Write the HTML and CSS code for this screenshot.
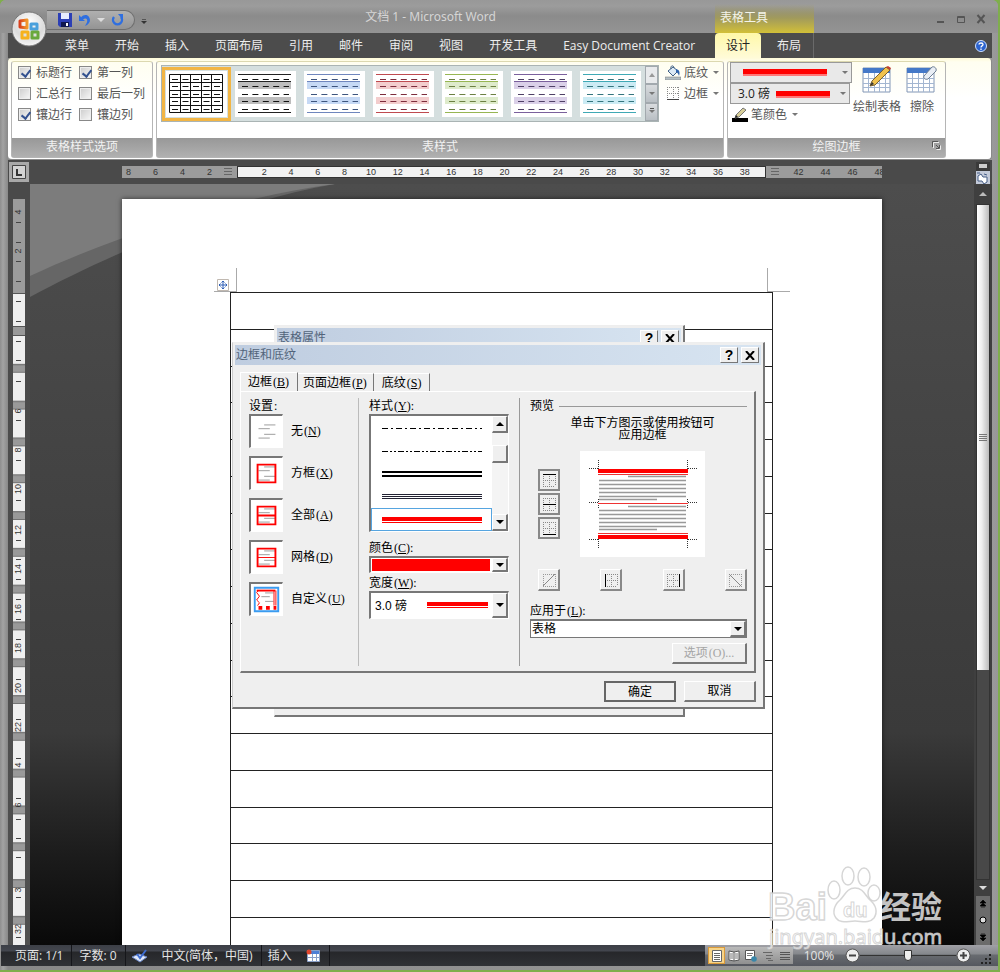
FILE: index.html
```html
<!DOCTYPE html>
<html lang="zh-CN">
<head>
<meta charset="utf-8">
<title>文档 1 - Microsoft Word</title>
<link rel="stylesheet" href="styles.css">
</head>
<body>
<svg class="defs" aria-hidden="true">
  <symbol id="style-thumb" viewBox="0 0 61 46">
    <path class="shade" d="M3 11h53v7H3zM3 26h53v7H3z"/>
    <path class="rule" d="M3 3.5h53M3 10.5h53M3 41.5h53"/>
    <path class="dash" d="M7 8.5h47M7 15.5h47M7 23.5h47M7 30.5h47M7 38.5h47"/>
  </symbol>
  <symbol id="text-lines" viewBox="0 0 33 33">
    <path d="M14 9.5h12M8 13.5h12M14 19.5h12M8 23.5h12" stroke="#999" fill="none"/>
  </symbol>
  <symbol id="dots" viewBox="0 0 18 18">
    <path d="M3 3.5h12M3 9.5h12M3 15.5h12M3.500 3v12M9.500 3v12M15.500 3v12" stroke="#888" stroke-dasharray="1 1" fill="none"/>
  </symbol>
</svg>
<div class="window">
  <header class="titlebar">
    <div class="quick">
      <div class="quick-pill">
        <button type="button" aria-label="保存"><svg width="14" height="14" viewBox="0 0 14 14"><path d="M0 0h14v14H2l-2-2z" fill="#2c3fb5"/><path d="M3 0h8v6H3z" fill="#e6ebff"/><path d="M3 9h8v5H3z" fill="#10184f"/><path d="M8 10h2v3H8z" fill="#fff"/></svg></button>
        <button type="button" aria-label="撤消"><svg width="13" height="13" viewBox="0 0 13 13"><path d="M1 1v6h6L5 5.200c3-2 5 0 4 3L7 12c5-2 6-6 4-9S5 1 3.200 3.200z" fill="#2f6fe0"/></svg></button>
        <i class="tri light"></i>
        <button type="button" aria-label="重复"><svg width="13" height="13" viewBox="0 0 13 13"><path d="M3 3a4.500 4.500 0 1 0 7 0" fill="none" stroke="#2f6fe0" stroke-width="2.400"/><path d="M7 0h5v6z" fill="#2f6fe0"/></svg></button>
      </div>
      <button type="button" class="quick-more" aria-label="自定义"><i class="tri dark lined"></i></button>
    </div>
    <h1 class="title">文档 1 - Microsoft Word</h1>
    <div class="context-title">表格工具</div>
    <div class="window-buttons">
      <button type="button" aria-label="最小化"><svg width="10" height="10" viewBox="0 0 10 10"><path d="M1 8h7" stroke="#555" stroke-width="2"/></svg></button>
      <button type="button" aria-label="最大化"><svg width="10" height="10" viewBox="0 0 10 10"><path d="M1.500 2.500h7v6h-7zM1 3.500h8" stroke="#555" fill="none"/></svg></button>
      <button type="button" aria-label="关闭"><svg width="10" height="10" viewBox="0 0 10 10"><path d="M1.500 1l7 8M8.500 1l-7 8" stroke="#555" stroke-width="2"/></svg></button>
    </div>
  </header>
  <button type="button" class="orb" aria-label="Office">
    <svg width="36" height="36" viewBox="0 0 36 36">
      <defs>
        <radialGradient id="orb-fill" cx=".5" cy=".3" r=".75"><stop offset="0" stop-color="#fff"/><stop offset=".6" stop-color="#dcdcdc"/><stop offset="1" stop-color="#fafafa"/></radialGradient>
        <linearGradient id="orb-red"><stop offset="0" stop-color="#d8401c"/><stop offset="1" stop-color="#f29a2c"/></linearGradient>
      </defs>
      <circle cx="18" cy="18" r="17" fill="url(#orb-fill)" stroke="#777"/>
      <g fill="none" stroke-width="3" stroke-linejoin="round">
        <path d="M9 10l7-1v8l-7-1z" stroke="url(#orb-red)"/>
        <path d="M20 13h6v5h-6z" stroke="#4aa0dc"/>
        <path d="M11 21h6v6h-6z" stroke="#f6b21c"/>
        <path d="M21 21h6v6h-6z" stroke="#6aa83c"/>
      </g>
    </svg>
  </button>
  <nav class="menubar">
    <a href="#">菜单</a><a href="#">开始</a><a href="#">插入</a><a href="#">页面布局</a><a href="#">引用</a><a href="#">邮件</a><a href="#">审阅</a><a href="#">视图</a><a href="#">开发工具</a><a href="#">Easy Document Creator</a>
    <div class="context-tabs"><a href="#" class="active">设计</a><a href="#">布局</a></div>
    <div class="help"><button type="button" aria-label="帮助"><svg width="12" height="12" viewBox="0 0 12 12"><circle cx="6" cy="6" r="5.500" fill="#2b63cf" stroke="#cfe0ff"/><path d="M4 4.500C4 2.500 8 2.500 8 4.500 8 6 6 5.800 6 7.500M6 8.500v1.400" stroke="#fff" stroke-width="1.300" fill="none"/></svg></button></div>
  </nav>
  <section class="ribbon">
    <div class="group options">
      <div class="group-body checks">
        <label><input type="checkbox" checked>标题行</label><label><input type="checkbox" checked>第一列</label>
        <label><input type="checkbox">汇总行</label><label><input type="checkbox">最后一列</label>
        <label><input type="checkbox" checked>镶边行</label><label><input type="checkbox">镶边列</label>
      </div>
      <div class="group-label">表格样式选项</div>
    </div>
    <div class="group styles">
      <div class="group-body styles-body">
        <div class="gallery">
          <button type="button" class="thumb selected" aria-label="网格型"><svg viewBox="0 0 61 46"><path d="M3.500 3.500h53v38h-53zM3 11.500h53M3 19.500h53M3 26.500h53M3 34.500h53M14.500 3v38M24.500 3v38M35.500 3v38M45.500 3v38" fill="none" stroke="#111"/><path d="M6 8.500h50M6 15.500h50M6 23.500h50M6 30.500h50M6 38.500h50" stroke="#111" stroke-dasharray="6 4.500"/></svg></button>
          <button type="button" class="thumb thumb-black" aria-label="黑色"><svg><use href="#style-thumb"/></svg></button>
          <button type="button" class="thumb thumb-blue" aria-label="蓝色"><svg><use href="#style-thumb"/></svg></button>
          <button type="button" class="thumb thumb-red" aria-label="红色"><svg><use href="#style-thumb"/></svg></button>
          <button type="button" class="thumb thumb-green" aria-label="绿色"><svg><use href="#style-thumb"/></svg></button>
          <button type="button" class="thumb thumb-purple" aria-label="紫色"><svg><use href="#style-thumb"/></svg></button>
          <button type="button" class="thumb thumb-teal" aria-label="青色"><svg><use href="#style-thumb"/></svg></button>
          <div class="gallery-scroll">
            <button type="button" aria-label="上一行" class="faded"><i class="tri up"></i></button>
            <button type="button" aria-label="下一行"><i class="tri gray"></i></button>
            <button type="button" aria-label="其他"><i class="tri gray lined"></i></button>
          </div>
        </div>
        <div class="side-tools">
          <button type="button"><svg width="16" height="15" viewBox="0 0 16 15"><path d="M0 12h16v3H0z" fill="#b4bfc4" stroke="#777" stroke-width=".5"/><path d="M3 6l5-4 5 4-5 5z" fill="#dce9f5" stroke="#3f5f85"/><path d="M6 4c-1-4 3-4 3-1" fill="none" stroke="#3f5f85"/><path d="M11 4c4 1 4 4 3 7-1-3-2-4-3-4z" fill="#2f63ad"/></svg>底纹<i class="tri gray"></i></button>
          <button type="button"><svg width="16" height="15" viewBox="0 0 16 15"><path d="M2 1.500h12M2 7.500h12M2.500 1v12M8.500 1v12M13.500 1v12" stroke="#888" stroke-dasharray="1 1"/><path d="M2 13.500h12" stroke="#444"/></svg>边框<i class="tri gray"></i></button>
        </div>
      </div>
      <div class="group-label">表样式</div>
    </div>
    <div class="group draw">
      <div class="group-body draw-body">
        <div class="pens">
          <span class="pen-combo"><select class="pen-style" aria-label="笔样式"><option></option></select><i class="tri gray"></i></span>
          <span class="pen-combo narrow"><select class="pen-width" aria-label="笔划粗细"><option>3.0 磅</option></select><i class="tri gray"></i></span>
          <button type="button" class="pen-color"><svg width="16" height="15" viewBox="0 0 16 15"><path d="M0 11h16v4H0z" fill="#000"/><path d="M3 11l1-3 7-7 3 2-7 7z" fill="#d8cf9a" stroke="#777"/><path d="M3 11l1-3 2 2z" fill="#222"/></svg>笔颜色<i class="tri gray"></i></button>
        </div>
        <button type="button" class="big"><svg width="30" height="30" viewBox="0 0 30 30"><path d="M1 3h27v24H1z" fill="#fff" stroke="#8296b5"/><path d="M1 3h27v5H1z" fill="#4478c8"/><path d="M1 13.500h27M1 18.500h27M1 22.500h27M6.500 8v19M12.500 8v19M17.500 8v19M23.500 8v19" stroke="#a3b6d1"/><path d="M8 21l2-5L24 2l4 3-15 15z" fill="#f0c24e" stroke="#7b6230"/><path d="M24 2l2-1 3 2-1 2z" fill="#c9402e"/><path d="M8 21l2-4 2 2z" fill="#333"/></svg>绘制表格</button>
        <button type="button" class="big"><svg width="32" height="30" viewBox="0 0 32 30"><path d="M1 3h27v24H1z" fill="#fff" stroke="#8296b5"/><path d="M1 3h27v5H1z" fill="#4478c8"/><path d="M1 13.500h27M1 18.500h27M1 22.500h27M6.500 8v19M12.500 8v19M17.500 8v19M23.500 8v19" stroke="#a3b6d1"/><path d="M18 11l8-9c2-1 5 1 4 4l-8 8c-3 1-5-1-4-3z" fill="#e9eef5" stroke="#6d7d92"/></svg>擦除</button>
      </div>
      <div class="group-label">绘图边框<button type="button" class="launcher" aria-label="边框和底纹"><svg width="9" height="9" viewBox="0 0 9 9"><path d="M1.500 7V1.500H7M4 4l4 4M8.500 4.500v4h-4" stroke="#eee" fill="none"/><path d="M.5 6V.5H6M4 4l3 3M7.500 4v3.500H4" stroke="#555" fill="none"/></svg></button></div>
    </div>
  </section>

  <main class="workspace">
    <button type="button" class="tab-stop" aria-label="制表符"><svg width="14" height="14" viewBox="0 0 14 14"><path d="M.5.500h13v13H.5z" fill="#d2d2d2" stroke="#444"/><path d="M5 4v6h5" fill="none" stroke="#333" stroke-width="2"/></svg></button>
    <div class="hruler-wrap">
      <div class="hruler">
        <div class="seg left"><span>8</span><span>6</span><span>4</span><span>2</span><i class="indent"></i></div>
        <div class="seg mid"><span>2</span><span>4</span><span>6</span><span>8</span><span>10</span><span>12</span><span>14</span><span>16</span><span>18</span><span>20</span><span>22</span><span>24</span><span>26</span><span>28</span><span>30</span><span>32</span><span>34</span><span>36</span><span>38</span></div>
        <div class="seg right"><i class="indent"></i><span>42</span><span>44</span><span>46</span><span>48</span></div>
      </div>
    </div>
    <div class="split">
      <i class="split-bar"></i>
      <button type="button" aria-label="标尺"><svg width="13" height="14" viewBox="0 0 13 14"><path d="M2 4l3-2 2 3h4v5l-3 2-2-3H2zM1 1h3M8 2l3 1" fill="#fff" stroke="#445c85"/></svg></button>
    </div>
    <div class="vruler">
      <svg width="12" height="760" viewBox="0 0 12 760">
        <defs><pattern id="rows" x="0" y="137" width="12" height="36.800" patternUnits="userSpaceOnUse"><path d="M0 0h12v36.800H0z" fill="#efefef"/><path d="M0 28h12v8.800H0z" fill="#999"/><path d="M0 28.500h12M0 36.500h12" stroke="#666"/></pattern></defs>
        <path d="M0 0h12v95H0z" fill="#9b9b9b"/>
        <path d="M0 95h12v32H0z" fill="#efefef"/>
        <path d="M0 127h12v10H0z" fill="#999"/>
        <path d="M0 137h12v623H0z" fill="url(#rows)"/>
        <path d="M0 94.500h12M0 127.500h12M0 136.500h12" stroke="#555"/>
        <path d="M3 23.500h5M3 43.500h5M3 62.500h5M3 82.500h5M3 102.500h5M3 122.500h5M3 142.500h5M3 161.500h5M3 182.500h5M3 221.500h5M3 261.500h5M3 301.500h5M3 341.500h5M3 360.500h5M3 380.500h5M3 400.500h5M3 420.500h5M3 440.500h5M3 480.500h5M3 520.500h5M3 559.500h5M3 599.500h5M3 620.500h5M3 639.500h5M3 658.500h5M3 698.500h5M3 738.500h5" stroke="#444"/>
        <g font-family="Liberation Sans" font-size="9" fill="#333" text-anchor="middle">
          <text transform="translate(8 13) rotate(-90)">4</text><text transform="translate(8 52) rotate(-90)">2</text>
          <text transform="translate(8 212) rotate(-90)">6</text><text transform="translate(8 251) rotate(-90)">8</text>
          <text transform="translate(8 290) rotate(-90)">10</text><text transform="translate(8 331) rotate(-90)">12</text>
          <text transform="translate(8 370) rotate(-90)">14</text><text transform="translate(8 410) rotate(-90)">16</text>
          <text transform="translate(8 449) rotate(-90)">18</text><text transform="translate(8 489) rotate(-90)">20</text>
          <text transform="translate(8 528) rotate(-90)">22</text><text transform="translate(8 566) rotate(-90)">4</text>
          <text transform="translate(8 606) rotate(-90)">6</text><text transform="translate(8 691) rotate(-90)">3</text>
          <text transform="translate(8 730) rotate(-90)">32</text>
        </g>
      </svg>
    </div>
    <div class="canvas">
      <svg class="swoosh" width="310" height="115" viewBox="0 0 310 115"><path d="M0 0h305C200 18 80 70 0 113z" fill="#666"/><path d="M0 0h305C210 12 90 50 0 92z" fill="#7c7c7c"/></svg>
      <article class="page">
        <div class="crop-marks">
          <svg width="24" height="24" viewBox="0 0 24 24"><path d="M22.500 0v23M0 23.500h23" stroke="#aaa"/><path d="M3.500 11.500h11v11h-11z" fill="#fff" stroke="#c0b8b0"/><path d="M9 13v8M5 17h8M7.500 14.500L9 13l1.500 1.500M7.500 19.500L9 21l1.500-1.500M6.500 15.500L5 17l1.500 1.500M11.500 15.500L13 17l-1.500 1.500" fill="none" stroke="#2f5fb5"/></svg>
          <svg width="24" height="24" viewBox="0 0 24 24"><path d="M1.500 0v23M1 23.500h23" stroke="#aaa"/></svg>
        </div>
        <table class="doc-table">
          <tr><td></td></tr><tr><td></td></tr><tr><td></td></tr><tr><td></td></tr><tr><td></td></tr><tr><td></td></tr>
          <tr><td></td></tr><tr><td></td></tr><tr><td></td></tr><tr><td></td></tr><tr><td></td></tr><tr><td></td></tr>
          <tr><td></td></tr><tr><td></td></tr><tr><td></td></tr><tr><td></td></tr><tr><td></td></tr><tr><td></td></tr>
        </table>

        <div class="dialog back">
          <div class="dialog-title"><span>表格属性</span><button type="button" aria-label="帮助">?</button><button type="button" aria-label="关闭"><svg width="10" height="9" viewBox="0 0 10 9"><path d="M1 0l8 9M9 0L1 9" stroke="#000" stroke-width="2"/></svg></button></div>
        </div>

        <div class="dialog front" role="dialog" aria-label="边框和底纹">
          <div class="dialog-title"><span>边框和底纹</span><button type="button" aria-label="帮助">?</button><button type="button" aria-label="关闭"><svg width="10" height="9" viewBox="0 0 10 9"><path d="M1 0l8 9M9 0L1 9" stroke="#000" stroke-width="2"/></svg></button></div>
          <div class="dialog-tabs">
            <button type="button" class="current">边框<kbd>(<u>B</u>)</kbd></button><button type="button">页面边框<kbd>(<u>P</u>)</kbd></button><button type="button">底纹<kbd>(<u>S</u>)</kbd></button>
          </div>
          <div class="panel">
            <div class="settings">
              <p class="caption">设置<kbd>:</kbd></p>
              <button type="button" class="setting"><svg viewBox="0 0 33 33"><use href="#text-lines"/></svg><span>无<kbd>(<u>N</u>)</kbd></span></button>
              <button type="button" class="setting"><svg viewBox="0 0 33 33"><use href="#text-lines"/><path d="M7 7h19v19H7z" class="red-box"/></svg><span>方框<kbd>(<u>X</u>)</kbd></span></button>
              <button type="button" class="setting"><svg viewBox="0 0 33 33"><use href="#text-lines"/><path d="M7 7h19v19H7zM7 16.500h19" class="red-box"/></svg><span>全部<kbd>(<u>A</u>)</kbd></span></button>
              <button type="button" class="setting"><svg viewBox="0 0 33 33"><use href="#text-lines"/><path d="M7 7h19v19H7z" class="red-box"/><path d="M7 16.500h19" stroke="red"/></svg><span>网格<kbd>(<u>D</u>)</kbd></span></button>
              <button type="button" class="setting"><svg viewBox="0 0 33 33"><path d="M4 4h25v25H4z" fill="none" stroke="#3a9bf0" stroke-width="2"/><path d="M15 9.500h9M11 13.500h9M15 18.500h9" stroke="#999"/><path d="M6 7h20" stroke="red" stroke-width="2"/><path d="M24.500 7v16M26.500 7v16" stroke="red"/><path d="M8 7l-2 2 3 4-3 4 3 3-2 3" fill="none" stroke="red"/><path d="M8 25.500h19" stroke="red" stroke-width="4" stroke-dasharray="4 4"/></svg><span>自定义<kbd>(<u>U</u>)</kbd></span></button>
            </div>
            <div class="line-options">
              <p class="caption">样式<kbd>(<u>Y</u>):</kbd></p>
              <div class="listbox">
                <ul role="listbox" aria-label="样式">
                  <li role="option"><svg width="100" height="8"><path d="M0 4.500h100" stroke="#000" stroke-dasharray="6 3 2 3"/></svg></li>
                  <li role="option"><svg width="100" height="8"><path d="M0 4.500h100" stroke="#000" stroke-dasharray="6 2 2 2 2 2"/></svg></li>
                  <li role="option"><svg width="100" height="8"><path d="M0 2h100M0 6h100" stroke="#000" stroke-width="2"/></svg></li>
                  <li role="option"><svg width="100" height="8"><path d="M0 1.500h100M0 3.500h100M0 5.500h100" stroke="#223"/></svg></li>
                  <li role="option" class="picked" aria-selected="true"><svg width="100" height="8"><path d="M0 3h100" stroke="red" stroke-width="4"/><path d="M0 6.500h100" stroke="red"/></svg></li>
                </ul>
                <div class="list-scroll"><button type="button" aria-label="向上"><i class="arrow up"></i></button><span class="list-track"><i class="list-thumb"></i></span><button type="button" aria-label="向下"><i class="arrow"></i></button></div>
              </div>
              <label class="caption" for="line-color">颜色<kbd>(<u>C</u>):</kbd></label>
              <span class="combo color"><select id="line-color"><option></option></select><span class="drop"><i class="arrow"></i></span></span>
              <label class="caption" for="line-width">宽度<kbd>(<u>W</u>):</kbd></label>
              <span class="combo width"><select id="line-width"><option>3.0 磅</option></select><span class="drop"><i class="arrow"></i></span></span>
            </div>
            <div class="preview">
              <p class="preview-head">预览</p>
              <p class="hint">单击下方图示或使用按钮可<br>应用边框</p>
              <div class="diagram">
                <div class="side-buttons">
                  <button type="button" class="pressed" aria-label="上边框"><svg width="18" height="18" viewBox="0 0 18 18"><use href="#dots"/><path d="M3 3.500h13" stroke="#000"/></svg></button>
                  <button type="button" class="pressed" aria-label="内横线"><svg width="18" height="18" viewBox="0 0 18 18"><use href="#dots"/><path d="M3 9.500h13" stroke="#000"/></svg></button>
                  <button type="button" class="pressed" aria-label="下边框"><svg width="18" height="18" viewBox="0 0 18 18"><use href="#dots"/><path d="M3 15.500h13" stroke="#000"/></svg></button>
                </div>
                <svg class="sheet" width="125" height="106" viewBox="0 0 125 106">
                  <path d="M0 0h125v106H0z" fill="#fff"/>
                  <path d="M18.500 9v9M107.500 9v9M9 17.500h9M108 17.500h9M18.500 48v9M107.500 48v9M9 51.500h9M108 51.500h9M18.500 88v10M107.500 88v10M9 88.500h9M108 88.500h9" stroke="#333" stroke-dasharray="1 1"/>
                  <path d="M48 25.500h58M19 29.500h87M19 33.500h87M19 37.500h87M19 41.500h87M19 45.500h87M19 48.500h58M48 55.500h58M19 59.500h87M19 63.500h87M19 67.500h87M19 71.500h87M19 75.500h87M19 78.500h58" stroke="#999" stroke-width="1.500"/>
                  <path d="M18 20h90M18 86h90" stroke="red" stroke-width="4"/>
                  <path d="M18 23.500h90M18 52.500h90M18 82.500h90" stroke="#e33"/>
                </svg>
              </div>
              <div class="bottom-buttons">
                <button type="button" aria-label="斜下框线" disabled><svg width="18" height="18" viewBox="0 0 18 18"><path d="M3 3.500h13M3 15.500h13M3.500 3v12M15.500 3v12" stroke="#999" stroke-dasharray="1 1"/><path d="M3 15L15 3" stroke="#888"/></svg></button>
                <button type="button" aria-label="左框线"><svg width="18" height="18" viewBox="0 0 18 18"><use href="#dots"/><path d="M3.500 3v13" stroke="#000"/></svg></button>
                <button type="button" aria-label="右框线"><svg width="18" height="18" viewBox="0 0 18 18"><use href="#dots"/><path d="M15.500 3v13" stroke="#000"/></svg></button>
                <button type="button" aria-label="斜上框线" disabled><svg width="18" height="18" viewBox="0 0 18 18"><path d="M3 3.500h13M3 15.500h13M3.500 3v12M15.500 3v12" stroke="#999" stroke-dasharray="1 1"/><path d="M3 3l12 12" stroke="#888"/></svg></button>
              </div>
              <label class="caption" for="apply-to">应用于<kbd>(<u>L</u>):</kbd></label>
              <span class="combo apply"><select id="apply-to"><option>表格</option></select><span class="drop"><i class="arrow"></i></span></span>
              <button type="button" class="push more" disabled>选项<kbd>(O)...</kbd></button>
            </div>
          </div>
          <div class="dialog-actions"><button type="button" class="push default">确定</button><button type="button" class="push">取消</button></div>
        </div>
      </article>
    </div>
    <div class="vscroll">
      <button type="button" aria-label="向上滚动"><i class="tri light up"></i></button>
      <div class="vtrack"><div class="vthumb"><i></i></div></div>
      <button type="button" class="down" aria-label="向下滚动"><i class="tri light"></i></button>
      <div class="browse">
        <button type="button" aria-label="上一页"><svg width="8" height="8" viewBox="0 0 8 8"><path d="M4 0l3 3H1zM4 3l3 3H1zM2 7h4" stroke="#000" stroke-width=".6"/></svg></button>
        <button type="button" aria-label="选择浏览对象"><svg width="8" height="8" viewBox="0 0 8 8"><circle cx="4" cy="4" r="3" fill="#ddd" stroke="#000"/></svg></button>
        <button type="button" aria-label="下一页"><svg width="8" height="8" viewBox="0 0 8 8"><path d="M4 8l3-3H1zM4 5l3-3H1zM2 1h4" stroke="#000" stroke-width=".6"/></svg></button>
      </div>
    </div>
  </main>

  <footer class="statusbar">
    <span class="status">页面: 1/1</span>
    <span class="status">字数: 0</span>
    <span class="status plain"><svg width="16" height="14" viewBox="0 0 16 14"><path d="M0 8l7-3 8 3-7 5z" fill="#dfe8fa" stroke="#6b86c4"/><path d="M5 5l3 4 6-8" stroke="#3d6cd0" stroke-width="2" fill="none"/></svg></span>
    <span class="status">中文(简体，中国)</span>
    <span class="status plain">插入</span>
    <span class="status"><svg width="15" height="13" viewBox="0 0 15 13"><path d="M1.500 1.500h12v11h-12z" fill="#fff" stroke="#8aa0c8"/><path d="M2 2h11v3H2z" fill="#4d7fd6"/><path d="M2 8.500h11M6.500 5v7M10.500 5v7" stroke="#8aa0c8"/><circle cx="3" cy="3" r="2.500" fill="#e0452c"/></svg></span>
    <div class="status-right">
      <div class="views">
        <button type="button" class="on" aria-label="页面视图"><svg width="12" height="12" viewBox="0 0 12 12"><path d="M1.500.5h9v11h-9z" fill="#fff" stroke="#666"/><path d="M3 3.500h6M3 5.500h6M3 7.500h6M3 9.500h6" stroke="#666"/></svg></button>
        <button type="button" aria-label="阅读版式"><svg width="12" height="12" viewBox="0 0 12 12"><path d="M1 1l5 1 5-1v9l-5 1-5-1zM6 2v9" fill="#fff" stroke="#555"/><path d="M2 4h3M2 6h3M2 8h3M7 4h3M7 6h3M7 8h3" stroke="#777"/></svg></button>
        <button type="button" aria-label="Web 版式"><svg width="12" height="12" viewBox="0 0 12 12"><path d="M.5.500h9v9h-9z" fill="#fff" stroke="#555"/><path d="M2 3.500h6M2 5.500h5" stroke="#777"/><circle cx="9" cy="9" r="2.800" fill="#3a86a8"/></svg></button>
        <button type="button" aria-label="大纲"><svg width="12" height="12" viewBox="0 0 12 12"><path d="M1 2.500h9M4 5.500h7M4 8.500h5M6 10.500h5" stroke="#666"/></svg></button>
        <button type="button" aria-label="普通"><svg width="12" height="12" viewBox="0 0 12 12"><path d="M1 2.500h10M1 4.500h10M1 7.500h10M1 9.500h10" stroke="#555"/></svg></button>
      </div>
      <span class="zoom-value">100%</span>
      <button type="button" class="round" aria-label="缩小"><svg width="15" height="15" viewBox="0 0 15 15"><circle cx="7.500" cy="7.500" r="6.500" fill="#eee" stroke="#555"/><path d="M4 7.500h7" stroke="#444" stroke-width="2"/></svg></button>
      <input type="range" class="zoom" min="0" max="100" value="50" aria-label="显示比例">
      <button type="button" class="round" aria-label="放大"><svg width="15" height="15" viewBox="0 0 15 15"><circle cx="7.500" cy="7.500" r="6.500" fill="#eee" stroke="#555"/><path d="M4 7.500h7M7.500 4v7" stroke="#444" stroke-width="2"/></svg></button>
      <svg class="grip" width="12" height="12" viewBox="0 0 12 12"><path d="M9 1h2v2H9zM9 5h2v2H9zM9 9h2v2H9zM5 5h2v2H5zM5 9h2v2H5zM1 9h2v2H1z" fill="#222"/></svg>
    </div>
  </footer>
  <svg class="watermark" width="180" height="90" viewBox="0 0 180 90" aria-hidden="true">
    <g fill="#fff" fill-opacity=".75" stroke="#cccccc" stroke-opacity=".8" stroke-width="1.500">
      <text x="1" y="57" font-family="Liberation Sans" font-weight="bold" font-size="38">Bai</text>
      <ellipse cx="67" cy="27" rx="6" ry="9"/><ellipse cx="81" cy="13" rx="6" ry="9"/><ellipse cx="97" cy="14" rx="6" ry="9"/><ellipse cx="107" cy="30" rx="6" ry="8"/>
      <path d="M88 25c8 0 10 7 15 12 6 5 8 12 4 18-5 6-12 3-19 3s-15 3-19-3c-4-5-2-13 4-18 5-5 7-12 15-12z"/>
      <text x="76" y="54" font-family="Liberation Sans" font-weight="bold" font-size="20" stroke-width="1">du</text>
      <text x="113" y="55" font-family="Noto Sans CJK SC" font-weight="bold" font-size="31" stroke="none">经验</text>
      <text x="2" y="81" font-family="Noto Sans" font-size="20" stroke-width="1">jingyan.baidu.com</text>
    </g>
  </svg>
</div>
</body>
</html>
```

FILE: styles.css
```css
* { box-sizing: border-box; }

body {
  margin: 0;
  height: 100vh;
  overflow: hidden;
  background: #7fae4c;
  font-family: "Open Sans", "Noto Sans CJK SC", sans-serif;
  font-size: 12px;
  line-height: 16px;
}

button, select, input { font: inherit; color: inherit; margin: 0; }
button { border: 0; padding: 0; background: none; }
a { color: inherit; text-decoration: none; }
p { margin: 0; }
svg { display: block; flex: none; }
.defs { position: absolute; width: 0; height: 0; }

.window {
  position: relative;
  display: flex;
  flex-direction: column;
  height: calc(100vh - 2px);
  margin-right: 2px;
  padding-bottom: 4px;
  border-radius: 6px 6px 0 0;
  background: linear-gradient(90deg, #8e8e8e, #a3a3a3 3px, #888 8px, #9a9a9a calc(100% - 6px), #979797);
  overflow: hidden;
}

/* Small triangles */
.tri {
  display: inline-block;
  border: 3px solid transparent;
  border-top-color: #333;
  border-bottom: 0;
}
.tri.up { border-top: 0; border-bottom: 4px solid #999; }
.tri.light { border-width: 4px 4px 0; border-top-color: #ddd; }
.tri.light.up { border-width: 0 4px 4px; border-bottom-color: #bbb; }
.tri.gray { border-top-color: #777; }
.tri.lined { box-shadow: 0 -3px 0 -1px #555; }
.arrow {
  border: 4px solid transparent;
  border-top-color: #000;
  border-bottom: 0;
}
.arrow.up { border-top: 0; border-bottom: 4px solid #000; }

/* Title bar */
.titlebar {
  display: flex;
  flex: none;
  height: 33px;
  background: linear-gradient(#989898, #9c9c9c 6px, #8b8b8b 16px, #949494);
}
.quick { display: flex; width: 146px; padding: 10px 0 3px 47px; align-items: center; gap: 6px; }
.quick-pill {
  display: flex;
  flex: none;
  align-items: center;
  gap: 6px;
  width: 88px;
  height: 20px;
  padding-left: 11px;
  border: 1px solid #6f6f6f;
  border-left: 0;
  border-radius: 0 10px 10px 0;
  background: linear-gradient(#b0b0b0, #949494);
}
.title {
  flex: 1;
  margin: 0;
  padding-top: 9px;
  font: 12px/16px "Noto Sans", "Noto Sans CJK SC", sans-serif;
  text-align: center;
  color: #d5d5d5;
}
.context-title {
  width: 99px;
  padding: 10px 0 0 5px;
  color: #f4f4ea;
  background: linear-gradient(#94949400 4px, #a19a5c 18px, #d2c038);
}
.window-buttons {
  display: flex;
  justify-content: flex-end;
  gap: 10px;
  width: 184px;
  padding: 14px 12px 9px 0;
}
.orb { position: absolute; left: 11px; top: 11px; }

/* Tabs */
.menubar {
  display: flex;
  flex: none;
  height: 25px;
  margin: 0 6px 0 8px;
  padding-left: 44px;
  background: #4c4c4c;
  color: #eee;
}
.menubar a { padding: 5px 13px 0; white-space: nowrap; }
.context-tabs {
  display: flex;
  width: 99px;
  margin-left: auto;
  border-right: 1px solid #6a6a6a;
}
.context-tabs a.active {
  padding: 5px 11px 0;
  border-radius: 4px 4px 0 0;
  background: linear-gradient(#fff8a8, #fffbd8);
  color: #222;
}
.context-tabs a:last-child { padding: 5px 0 0 16px; }
.help { display: flex; justify-content: flex-end; align-items: center; width: 178px; padding-right: 5px; }

/* Ribbon */
.ribbon {
  display: flex;
  flex: none;
  gap: 3px;
  margin: 0 6px 0 8px;
  padding: 3px 3px 1px;
  border: 1px solid #8a8a8a;
  border-width: 0 1px 1px 0;
  border-radius: 4px;
  background: linear-gradient(#fffbd8, #fffef0 4px, #fff 40px);
}
.group {
  display: flex;
  flex-direction: column;
  border: 1px solid #b5b5b5;
  border-top-color: #dcd8b0;
  border-radius: 3px;
  color: #555;
}
.group.options { width: 142px; }
.group.styles { flex: 1; max-width: 568px; }
.group.draw { width: 219px; }
.group-body { height: 76px; }
.group-label {
  position: relative;
  height: 19px;
  line-height: 18px;
  text-align: center;
  color: #f2f2f2;
  background: linear-gradient(#989898, #b0b0b0);
}
.launcher { position: absolute; right: 4px; top: 3px; }
.checks {
  display: grid;
  grid-template-columns: 61px 1fr;
  grid-auto-rows: 21px;
  padding: 0 0 0 6px;
}
.checks label { display: flex; align-items: center; gap: 5px; white-space: nowrap; }
.checks input {
  appearance: none;
  width: 13px;
  height: 13px;
  border: 1px solid #888;
  background: linear-gradient(135deg, #ccc, #f8f8f8);
  box-shadow: inset 0 0 0 1px #eee;
}
.checks input:checked::before {
  content: "";
  display: block;
  width: 4px;
  height: 7px;
  margin: 1px 0 0 4px;
  border: solid #33518f;
  border-width: 0 2px 2px 0;
  transform: rotate(38deg);
}
.styles-body { display: flex; gap: 6px; padding: 3px 0 0 4px; }
.gallery {
  display: flex;
  flex: none;
  gap: 8px;
  width: 498px;
  height: 57px;
  padding: 5px 0 0 4px;
  border: 1px solid #aab4b4;
  background: #d5dfdf;
}
.thumb { width: 61px; height: 46px; background: #fff; }
.thumb svg { width: 61px; height: 46px; }
.thumb.selected { outline: 3px solid #f2b544; outline-offset: 1px; }
.shade { fill: var(--shade); }
.rule { fill: none; stroke: var(--rule); }
.dash { fill: none; stroke: var(--dash); stroke-dasharray: 6 4.4; }
.thumb-black { --shade: #bdbdbd; --rule: #222; --dash: #111; }
.thumb-blue { --shade: #c6d9f5; --rule: #6f86bd; --dash: #3d547d; }
.thumb-red { --shade: #f3cdcd; --rule: #bf4a4f; --dash: #7d2c3c; }
.thumb-green { --shade: #deebcb; --rule: #97b653; --dash: #6c8042; }
.thumb-purple { --shade: #dad0e8; --rule: #7a609c; --dash: #4f4166; }
.thumb-teal { --shade: #cbebf4; --rule: #3fa9b5; --dash: #35757e; }
.gallery-scroll {
  display: flex;
  flex-direction: column;
  flex: 1;
  margin: -5px 0 0 -4px;
}
.gallery-scroll button {
  flex: 1;
  display: grid;
  place-items: center;
  border: 1px solid #a2a9ae;
  background: linear-gradient(#d8dbde, #b9bfc4);
}
.gallery-scroll .faded { background: #e8eaec; }
.side-tools { display: flex; flex-direction: column; }
.side-tools button, .pen-color { display: flex; align-items: center; gap: 3px; height: 21px; margin-top: -3px; }
.side-tools button + button { margin-top: 0; }
.side-tools .tri, .pen-color .tri { margin-left: 2px; }
.draw-body { display: flex; padding: 0 0 0 2px; }
.pens { width: 122px; }
.pen-combo { position: relative; display: block; width: 122px; height: 21px; }
.pen-combo.narrow { width: 120px; }
.pen-combo select {
  appearance: none;
  display: block;
  width: 100%;
  height: 21px;
  padding: 0 7px;
  border: 1px solid #999;
  border-radius: 0;
  color: #222;
  background: #e9e9e9 no-repeat;
}
.pen-combo .pen-style {
  background-image: linear-gradient(#f00 5px, #f77 5px);
  background-size: 84px 7px;
  background-position: 12px 6px;
}
.pen-combo .pen-width {
  background-image: linear-gradient(#f00 5px, #f77 5px);
  background-size: 54px 7px;
  background-position: 45px 7px;
}
.pen-combo .tri { position: absolute; right: 4px; top: 9px; }
.pen-color { margin: 0 0 0 2px; }
.big {
  display: flex;
  flex-direction: column;
  align-items: center;
  gap: 4px;
  width: 50px;
  padding-top: 3px;
  justify-content: flex-start;
}
.big + .big { width: 40px; }

/* Workspace */
.workspace {
  display: grid;
  flex: 1;
  grid-template-columns: 22px 1fr 18px;
  grid-template-rows: 24px 1fr;
  min-height: 0;
  margin: 0 6px 0 8px;
  background: linear-gradient(#4a4a4a 40px, #505050);
}
.tab-stop {
  display: grid;
  place-items: center;
  width: 20px;
  height: 20px;
  margin: 2px 0 0 1px;
  background: #a8a8a8;
}
.hruler-wrap { display: flex; justify-content: center; padding-top: 6px; }
.hruler { display: flex; width: 760px; height: 12px; font: 9px/12px "Liberation Sans", sans-serif; color: #333; }
.seg { display: flex; overflow: hidden; background: #9b9b9b; }
.seg span { flex: none; width: 27px; text-align: center; }
.seg.left { width: 115px; justify-content: flex-end; padding-right: 4px; }
.seg.mid { flex: 1; padding: 0 7px 0 13px; border: 1px solid #333; line-height: 10px; background: #f2f2f2; }
.seg.mid span { flex: 1; width: auto; }
.seg.right { width: 116px; padding-left: 4px; }
.indent {
  flex: none;
  width: 8px;
  height: 9px;
  margin: 2px 1px 0;
  background: repeating-linear-gradient(#666 0 1px, transparent 1px 3px);
}
.seg.right .indent { margin-right: 6px; }
.split { padding: 2px 0 0 2px; }
.split-bar { display: block; width: 14px; height: 9px; border: solid #3a3a3a; border-width: 2px 3px 3px; background: #ccc; }
.split button { width: 14px; height: 15px; background: #c3cad9; }
.vruler { overflow: hidden; padding: 15px 0 0 5px; }
.canvas {
  position: relative;
  display: flex;
  flex-direction: column;
  min-height: 0;
  padding-top: 15px;
  overflow: hidden;
  background: linear-gradient(#4d4d4d, #3a3a3a 72%, #1c1c1c 88%, #090909);
}
.swoosh { position: absolute; left: 0; top: 0; }
.page {
  position: relative;
  flex: 1;
  width: 760px;
  min-height: 0;
  margin: 0 auto;
  padding: 69px 92px 0;
  overflow: hidden;
  background: #fff;
  box-shadow: 0 0 5px #0009;
}
.crop-marks { display: flex; justify-content: space-between; }
.doc-table {
  width: 543px;
  height: 663px;
  margin-left: 16px;
  border-collapse: collapse;
}
.doc-table td { padding: 0; border: 1px solid #222; }

.vscroll { display: flex; flex-direction: column; padding: 0 2px; background: #3f3f3f; }
.vscroll button { display: grid; place-items: center; height: 20px; }
.vscroll .down { height: 16px; }
.vtrack { flex: 1; border: 1px solid #333; background: #484848; }
.vthumb {
  display: grid;
  place-items: center;
  height: 69%;
  background: linear-gradient(90deg, #fff, #eee 40%, #bbb);
}
.vthumb i { width: 8px; height: 8px; background: repeating-linear-gradient(#777 0 1px, transparent 1px 2px); }
.browse { display: flex; flex-direction: column; height: 49px; background: #6b6b6b; }
.browse button { flex: 1; height: auto; }

/* Dialogs */
.dialog {
  position: absolute;
  padding: 2px;
  border: 1px solid #eee;
  border-right: 2px solid #777;
  border-bottom: 2px solid #777;
  background: #efefef;
  color: #000;
  font-family: "Liberation Sans", "Noto Sans CJK SC", sans-serif;
}
.dialog kbd { margin-left: 1px; font: 12px/16px "Liberation Serif", serif; }
.dialog.back { left: 152px; top: 126px; width: 411px; height: 392px; }
.dialog.front { left: 110px; top: 143px; width: 533px; height: 367px; border-left-color: #ccc; }
.dialog-title {
  display: flex;
  align-items: center;
  gap: 3px;
  height: 20px;
  padding: 0 2px 0 1px;
  color: #52647a;
  background: linear-gradient(90deg, #bfcde0, #d7e4f1);
}
.dialog-title span { flex: 1; }
.dialog-title button {
  display: grid;
  place-items: center;
  width: 18px;
  height: 16px;
  border: 1px solid #fff;
  border-right-color: #777;
  border-bottom-color: #777;
  background: #efefef;
  color: #000;
  font: bold 14px/14px "Liberation Sans", sans-serif;
}
.dialog-tabs { display: flex; height: 26px; padding: 7px 0 0 5px; align-items: flex-end; }
.dialog-tabs button { height: 18px; padding: 0 6px 0 5px; border-right: 1px solid #777; border-top: 1px solid #fff; line-height: 16px; white-space: nowrap; }
.dialog-tabs .current { height: 19px; padding: 0 8px 0 7px; border-left: 1px solid #fff; }
.dialog-tabs button:last-child { padding-left: 8px; padding-right: 8px; }
.panel {
  display: flex;
  height: 282px;
  margin: 0 5px;
  padding: 6px 7px 5px 8px;
  border: 1px solid #fff;
  border-right: 2px solid #777;
  border-bottom: 2px solid #777;
}
.caption { display: block; height: 16px; line-height: 16px; }
.settings { width: 110px; border-right: 1px solid #bbb; }
.setting { display: flex; align-items: center; gap: 8px; height: 34px; margin-bottom: 8px; white-space: nowrap; }
.setting svg {
  width: 34px;
  height: 34px;
  border: 1px solid #fff;
  border-left: 2px solid #777;
  border-top: 2px solid #777;
  background: #fff;
}
.red-box { fill: none; stroke: #f00; stroke-width: 2; }
.line-options { width: 161px; padding: 0 10px; border-right: 1px solid #999; }
.listbox {
  display: flex;
  height: 118px;
  margin-bottom: 8px;
  border: 1px solid #fff;
  border-left: 2px solid #777;
  border-top: 2px solid #777;
  background: #fff;
}
.listbox ul { flex: 1; margin: 0; padding: 0; list-style: none; }
.listbox li { display: grid; place-items: center; height: 23px; }
.listbox li.picked { border: 1px solid #56a5e0; }
.list-scroll { display: flex; flex-direction: column; width: 16px; background: #f4f4f4; }
.list-scroll button, .drop, .list-thumb {
  display: grid;
  place-items: center;
  border: 1px solid #fff;
  border-right: 2px solid #777;
  border-bottom: 2px solid #777;
  background: #efefef;
}
.list-scroll button { height: 17px; }
.list-track { flex: 1; padding-top: 12px; }
.list-thumb { height: 18px; }
.combo {
  position: relative;
  display: block;
  border: 1px solid #fff;
  border-left: 2px solid #777;
  border-top: 2px solid #777;
  background: #fff;
}
.combo select {
  appearance: none;
  display: block;
  width: 100%;
  height: 100%;
  padding: 0 4px;
  border: 0;
  border-radius: 0;
  background: #fff no-repeat;
}
.drop { position: absolute; right: 0; top: 0; bottom: 0; width: 16px; }
.color { height: 17px; margin-bottom: 2px; }
.color select { border: solid #fff; border-width: 1px 18px 1px 1px; background: #f00; }
.width { height: 28px; }
.width select {
  font: 12px "Liberation Sans", "Noto Sans CJK SC", sans-serif;
  background-image: linear-gradient(#f00 4px, #fff 4px 5px, #f00 5px);
  background-size: 61px 6px;
  background-position: 56px 9px;
}
.preview { display: flex; flex-direction: column; flex: 1; padding-left: 10px; }
.preview-head { display: flex; align-items: center; gap: 5px; }
.preview-head::after { content: ""; flex: 1; height: 1px; background: #999; }
.hint { margin-top: 3px; padding-left: 8px; line-height: 12px; text-align: center; }
.diagram { display: flex; align-items: center; gap: 20px; margin-top: 10px; padding-left: 8px; }
.side-buttons { display: flex; flex-direction: column; gap: 2px; }
.side-buttons button, .bottom-buttons button {
  display: grid;
  place-items: center;
  width: 22px;
  height: 22px;
  border: 1px solid #fff;
  border-right: 2px solid #888;
  border-bottom: 2px solid #888;
}
.side-buttons .pressed { border: 2px solid #888; }
.bottom-buttons { display: flex; justify-content: space-between; margin: 12px 0; padding-left: 8px; }
.apply { width: 217px; height: 19px; border: 1px solid #777; border-top-width: 2px; }
.apply select { padding: 0 1px; }
.push {
  height: 21px;
  width: 72px;
  border: 1px solid #fff;
  border-right: 2px solid #777;
  border-bottom: 2px solid #777;
  background: #efefef;
  line-height: 16px;
}
.push.default { border: 2px solid #666; }
.push.more { width: 75px; margin: 5px 0 0; align-self: flex-end; color: #a5a5a5; }
.dialog-actions { display: flex; justify-content: flex-end; gap: 8px; padding: 8px 5px 0; }

/* Status bar */
.statusbar {
  display: flex;
  flex: none;
  height: 21px;
  margin: 0 0 0 1px;
  color: #e4e4e4;
  background: linear-gradient(#3c3f46, #43464e 6px, #26272a 7px, #303236);
}
.status { display: flex; align-items: center; padding: 0 8px 0 7px; border-right: 1px solid #15161a; }
.status:first-child { padding-left: 14px; }
.status.plain { border-color: transparent; padding: 0 6px; }
.status-right {
  display: flex;
  align-items: center;
  width: 293px;
  margin-left: auto;
  padding-left: 3px;
  background: linear-gradient(#a0a0a6, #85888c 9px, #686b70 10px, #55585f);
}
.views { display: flex; height: 17px; background: linear-gradient(#b9b9b9, #909090); }
.views button { display: grid; place-items: center; width: 17px; height: 17px; }
.views .on { background: #f7d488; outline: 1px solid #d99a3a; outline-offset: -1px; }
.zoom-value { width: 52px; text-align: center; }
.zoom { appearance: none; flex: 1; width: 60px; height: 15px; background: linear-gradient(#333, #333) center / 100% 1px no-repeat; }
.zoom::-webkit-slider-thumb {
  appearance: none;
  width: 8px;
  height: 11px;
  border: 1px solid #333;
  border-radius: 0 0 4px 4px;
  background: #eee;
}
.grip { margin: 6px 6px 0 9px; }
.watermark { position: absolute; right: 51px; bottom: 17px; }
```
